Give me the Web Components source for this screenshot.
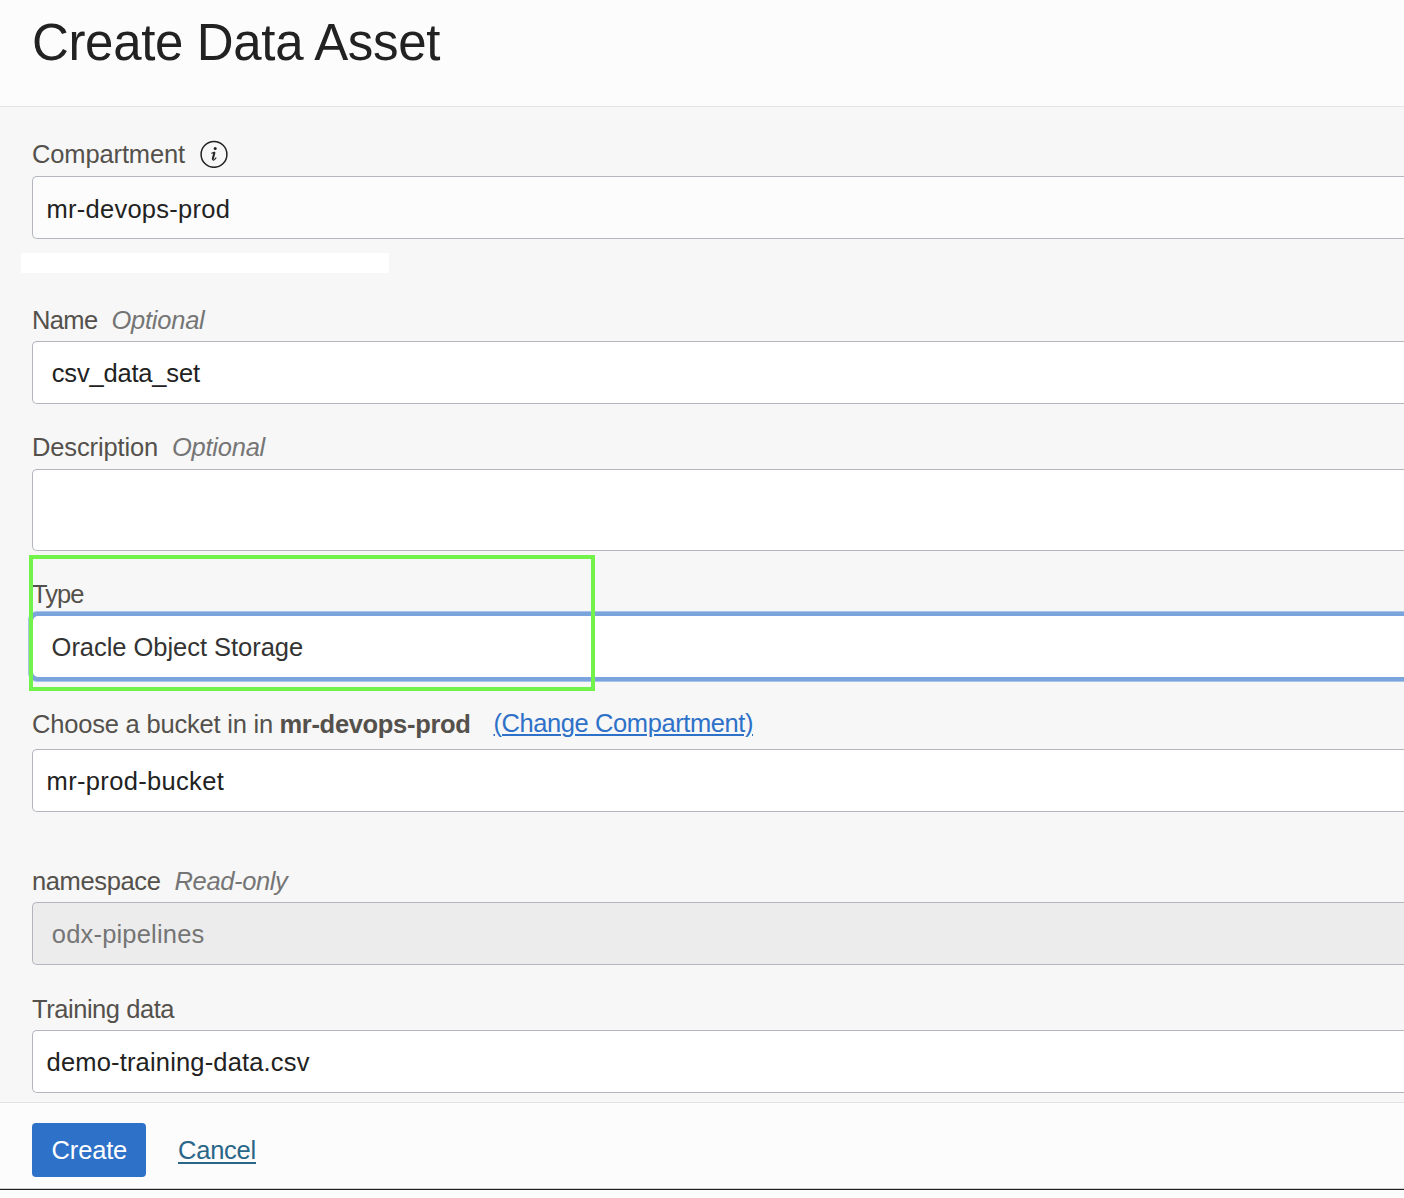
<!DOCTYPE html>
<html lang="en">
<head>
<meta charset="utf-8">
<title>Create Data Asset</title>
<style>
html,body{margin:0;height:100%}
body{font-family:"Liberation Sans",Arial,sans-serif;font-size:25.5px;line-height:30px;color:#222;background:#fcfcfc;overflow:hidden}
</style>
</head>
<body>
<asset-panel></asset-panel>
<script>
const shadow = (el, html) => {
  const t = document.createElement('template');
  t.innerHTML = html;
  const root = el.attachShadow({mode: 'open'});
  root.append(t.content.cloneNode(true));
  return root;
};

// A run of text tracked so that its advance equals the "w" attribute.
class TrackedText extends HTMLElement {
  connectedCallback() {
    if (this.shadowRoot) return;
    shadow(this, `<style>:host{display:inline-block;white-space:pre}</style><slot></slot>`);
    requestAnimationFrame(() => this.track());
    this.track();
  }
  track() {
    this.style.letterSpacing = '0px';
    const natural = this.getBoundingClientRect().width;
    const n = this.textContent.length;
    if (natural && n) this.style.letterSpacing = ((+this.getAttribute('w') - natural) / n).toFixed(4) + 'px';
  }
}

class InfoIcon extends HTMLElement {
  connectedCallback() {
    if (this.shadowRoot) return;
    shadow(this, `<style>:host{display:block;width:28px;height:28px}svg{display:block}</style>
    <svg width="28" height="28" viewBox="0 0 28 28" fill="none" stroke="#222" stroke-linecap="round" stroke-linejoin="round">
      <circle cx="14" cy="14.4" r="12.9" stroke-width="1.5"/>
      <circle cx="15.2" cy="8.6" r="1.5" fill="#222" stroke="none"/>
      <path d="M11.6 13.2 L14.4 12.4" stroke-width="1.1"/>
      <path d="M14.4 12.8 L12.8 18.8" stroke-width="2"/>
      <path d="M12.5 19.2 Q13 20.8 14.5 19.6 L16 17.8" stroke-width="1.1"/>
    </svg>`);
  }
}

class FormField extends HTMLElement {
  connectedCallback() {
    if (this.shadowRoot) return;
    shadow(this, `<style>
      :host{display:flex;flex-direction:column;gap:var(--gap,6px);margin-top:var(--above,0)}
      .label{display:flex;height:30px;color:#54514c}
      .box{box-sizing:border-box;height:63px;border:1px solid #b3b6bf;border-right:0;border-radius:5px 0 0 5px;
        background:#fff;padding:var(--top,16px) 0 0 18.8px;color:#222}
      :host([select]) .box{padding-left:13.6px}
      :host([tall]) .box{height:82px}
      :host([soft]) .box{background:#fcfcfc}
      :host([readonly]) .box{background:#ececec;color:#757575}
      :host([focused]){position:relative;z-index:0}
      :host([focused]) .box{position:relative;height:71px;margin-left:-4px;border:0;background:none;padding:21px 0 0 23.6px;color:#333}
      :host([focused]) .box::before{content:"";position:absolute;z-index:-1;inset:0;box-sizing:border-box;
        border:1px solid #a9c4ea;border-right:0;border-radius:9px 0 0 9px;background:#7ba3dc}
      :host([focused]) .box::after{content:"";position:absolute;z-index:-1;inset:5px 0 5px 5px;border-radius:5px 0 0 5px;background:#fff}
    </style>
    <div class="label"><slot name="label"></slot></div>
    <div class="box"><slot></slot></div>`);
  }
}

class HighlightFrame extends HTMLElement {
  connectedCallback() {
    if (this.shadowRoot) return;
    shadow(this, `<style>:host{display:block;position:relative}
      .frame{position:absolute;z-index:2;left:-3px;top:4px;width:566px;height:136px;box-sizing:border-box;border:4px solid #72f34b;pointer-events:none}</style>
      <slot></slot><div class="frame"></div>`);
  }
}

class PanelFooter extends HTMLElement {
  connectedCallback() {
    if (this.shadowRoot) return;
    shadow(this, `<style>
      :host{display:flex;box-sizing:border-box;height:88px;padding:20px 0 0 32px;border-top:1px solid #e3e3e3;border-bottom:1px solid #222;background:#fcfcfc;box-shadow:inset 0 -1px #cfcfcf}
      button{font:inherit;display:block;border:0;margin:0;width:114px;height:54px;padding:0 0 0 19.6px;text-align:left;border-radius:4px;background:#2e71c8;color:#fff}
      a{display:block;margin:12px 0 0 32px;height:30px;color:#2a6688;text-decoration:underline;text-decoration-thickness:2px;text-underline-offset:3px;text-decoration-skip-ink:auto}
      tracked-text{text-decoration:inherit}
    </style><button><tracked-text w="75.5">Create</tracked-text></button><a href="#"><tracked-text w="78">Cancel</tracked-text></a>`);
  }
}

class AssetPanel extends HTMLElement {
  connectedCallback() {
    if (this.shadowRoot) return;
    shadow(this, `<style>
      :host{display:block}
      header{box-sizing:border-box;height:107px;border-bottom:1px solid #e3e3e3;background:#fcfcfc;padding:13px 0 0 32px}
      h1{margin:0;font-size:51px;line-height:60px;font-weight:400;color:#222}
      main{box-sizing:border-box;height:995px;padding:32px 0 0 32px;background:#f7f7f7}
      .bar{width:368px;height:20px;margin:14px 0 0 -11px;background:#fff}
      i{color:#757575}
      .hint{margin-left:14px}
      info-icon{margin:1px 0 0 15px}
      a{color:#2e71c8;margin:-1px 0 0 23px;height:30px;text-decoration:underline;text-decoration-thickness:2px;text-underline-offset:2px}
      a tracked-text{text-decoration:inherit}
    </style>
    <header><h1><tracked-text w="408">Create Data Asset</tracked-text></h1></header>
    <main>
      <form-field select soft style="--gap:7px;--top:17px"><tracked-text slot="label" w="153">Compartment</tracked-text><info-icon slot="label"></info-icon><tracked-text w="183.5">mr-devops-prod</tracked-text></form-field>
      <div class="bar"></div>
      <form-field style="--above:32px"><tracked-text slot="label" w="65.5">Name</tracked-text><i slot="label" class="hint"><tracked-text w="93">Optional</tracked-text></i><tracked-text w="148">csv_data_set</tracked-text></form-field>
      <form-field tall style="--above:28px;--gap:7px"><tracked-text slot="label" w="126">Description</tracked-text><i slot="label" class="hint"><tracked-text w="93">Optional</tracked-text></i></form-field>
      <highlight-frame><div style="padding-top:28px"><form-field focused style="--gap:2px"><tracked-text slot="label" w="51.5">Type</tracked-text><tracked-text w="251.5">Oracle Object Storage</tracked-text></form-field></div></highlight-frame>
      <form-field select style="--above:27px;--gap:10px"><tracked-text slot="label" w="241">Choose a bucket in in</tracked-text><b slot="label" style="margin-left:6.5px"><tracked-text w="191">mr-devops-prod</tracked-text></b><a slot="label" href="#"><tracked-text w="259.5">(Change Compartment)</tracked-text></a><tracked-text w="177.5">mr-prod-bucket</tracked-text></form-field>
      <form-field readonly style="--above:54px"><tracked-text slot="label" w="128.5">namespace</tracked-text><i slot="label" class="hint"><tracked-text w="113">Read-only</tracked-text></i><tracked-text w="152.7">odx-pipelines</tracked-text></form-field>
      <form-field select style="--above:29px"><tracked-text slot="label" w="142">Training data</tracked-text><tracked-text w="263">demo-training-data.csv</tracked-text></form-field>
    </main>
    <panel-footer></panel-footer>`);
  }
}

customElements.define('tracked-text', TrackedText);
customElements.define('info-icon', InfoIcon);
customElements.define('form-field', FormField);
customElements.define('highlight-frame', HighlightFrame);
customElements.define('panel-footer', PanelFooter);
customElements.define('asset-panel', AssetPanel);
</script>
</body>
</html>
